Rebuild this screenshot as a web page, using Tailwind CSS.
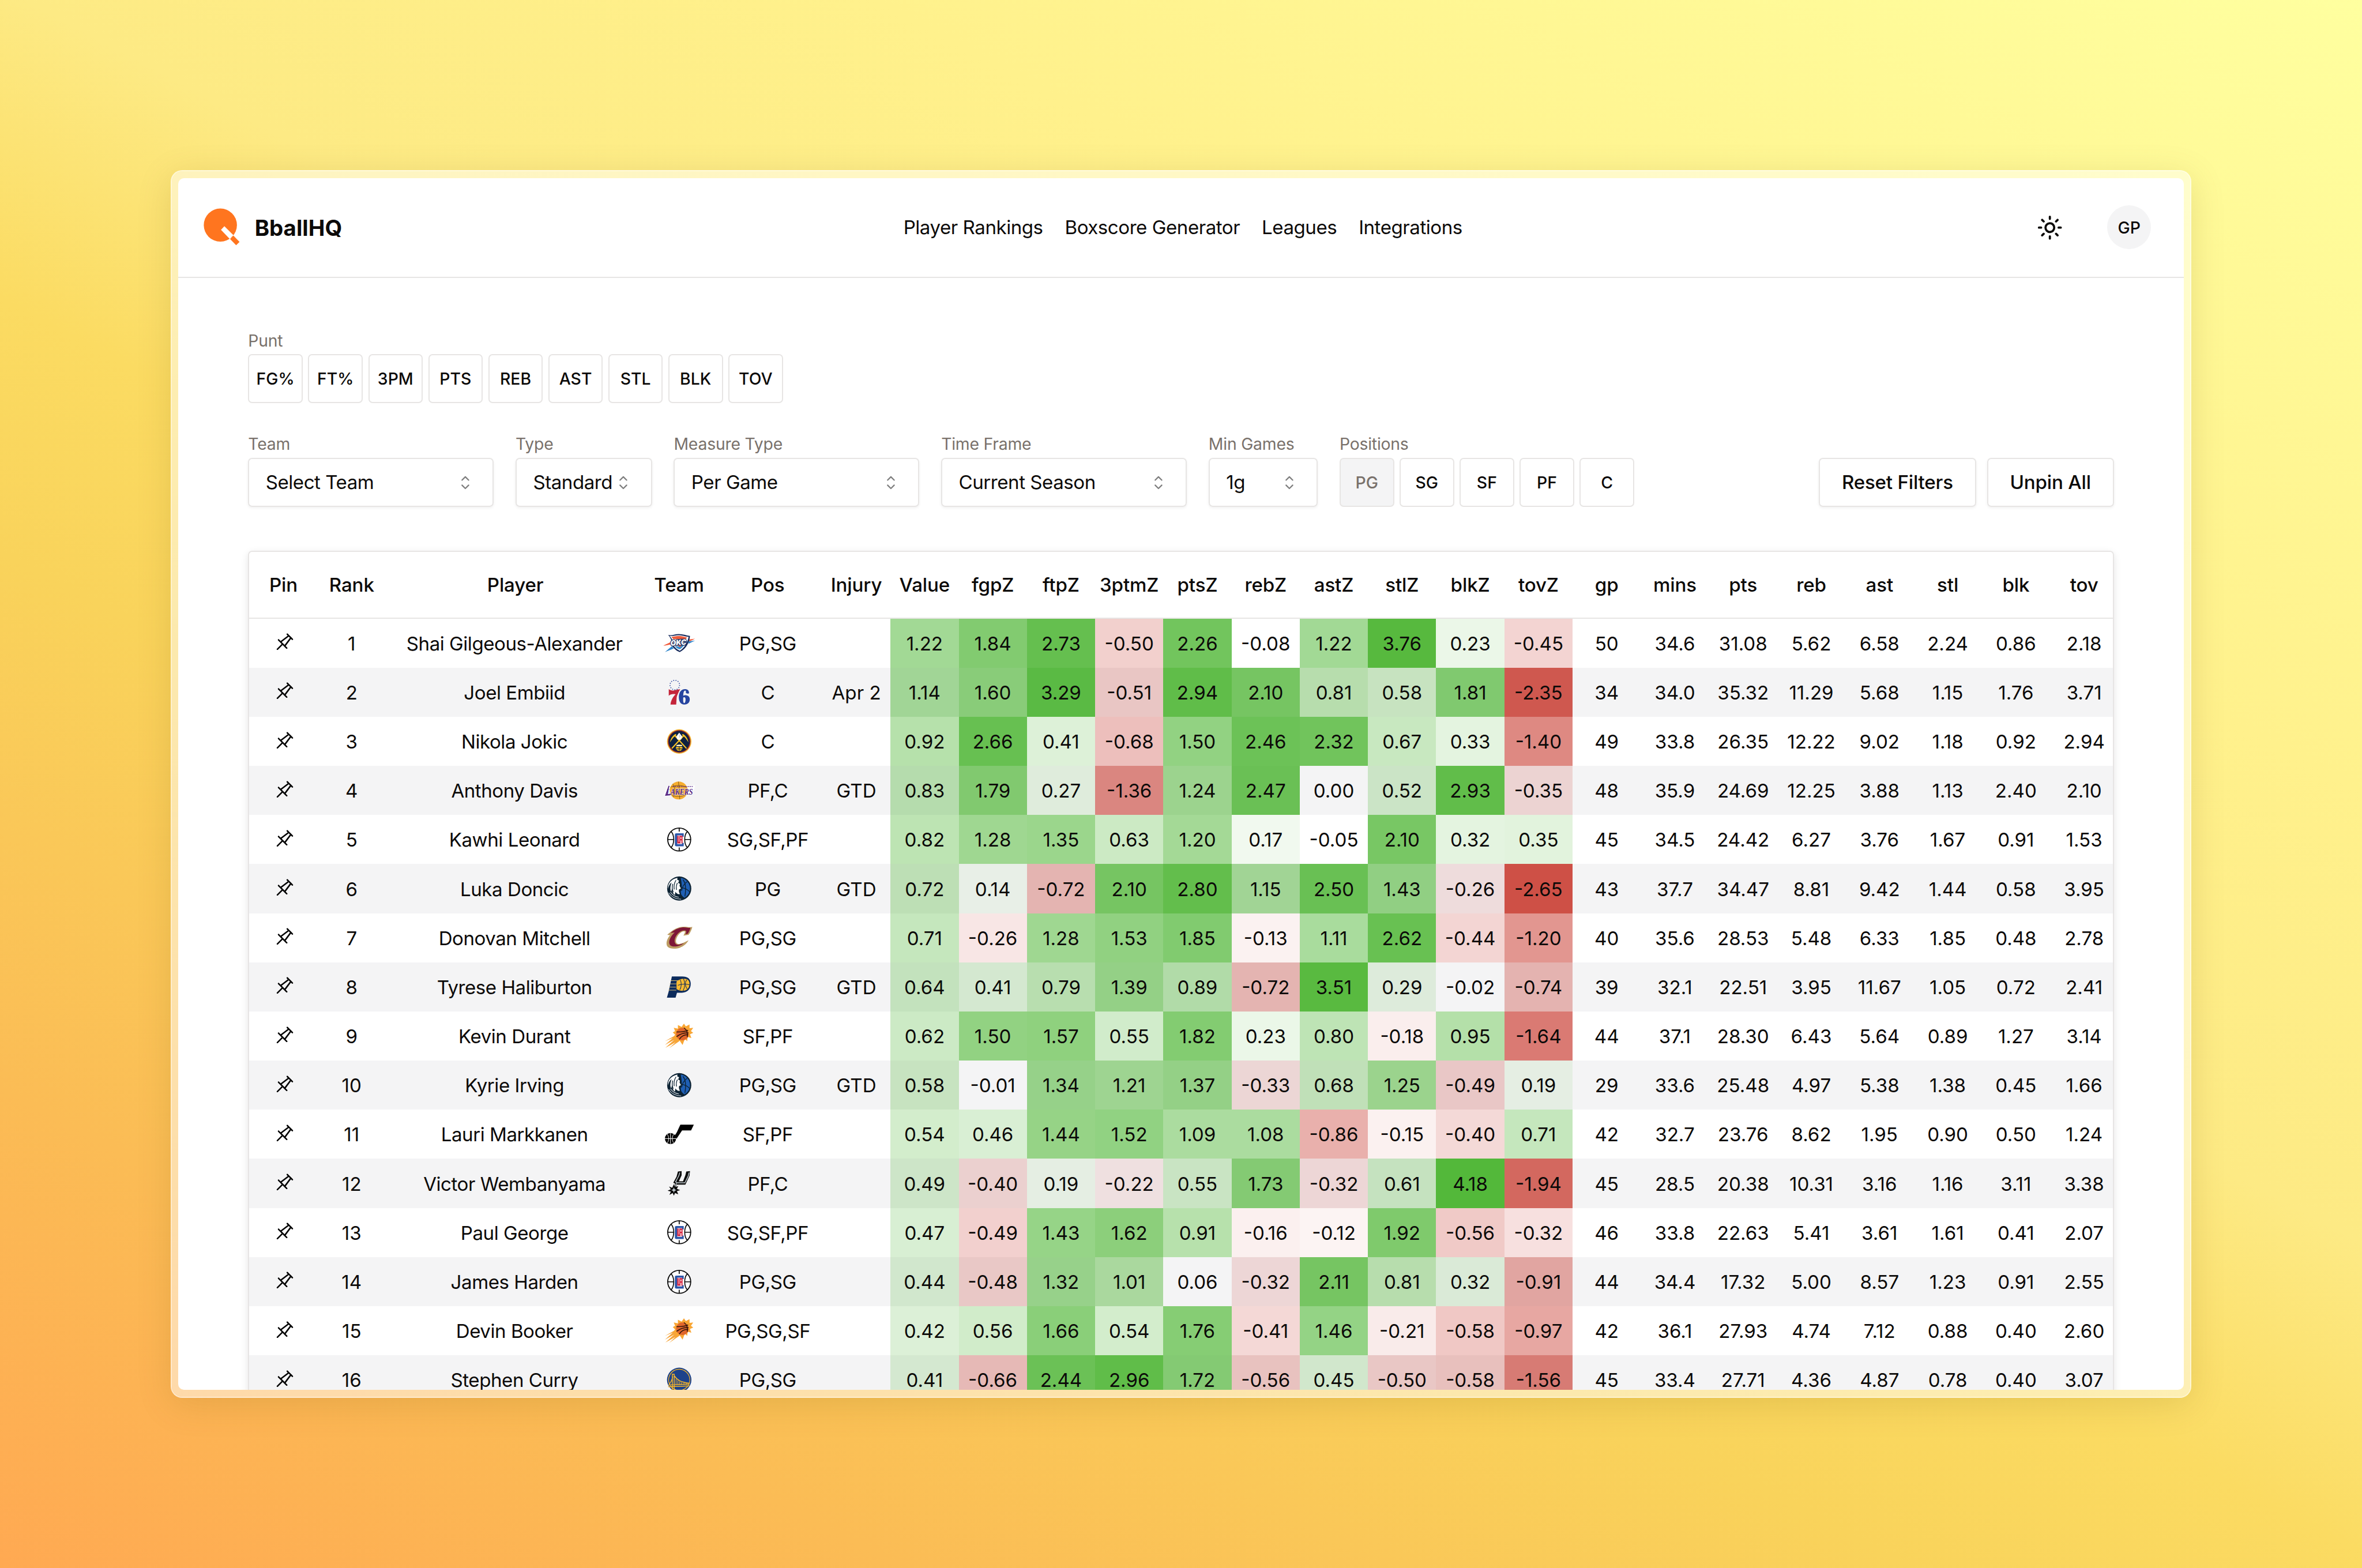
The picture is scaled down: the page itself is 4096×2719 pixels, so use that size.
<!DOCTYPE html>
<html lang="en" class="text-[37.853px]">
<head>
<meta charset="utf-8">
<title>BballHQ – Player Rankings</title>
<script src="https://cdn.jsdelivr.net/npm/@tailwindcss/browser@4"></script>
</head>
<body class="font-['Inter',sans-serif] text-stone-950 w-[4096px] h-[2719px] overflow-hidden flex items-center justify-center bg-[linear-gradient(28deg,#ffa952_0%,#fbbc55_17%,#f9d35b_36%,#fbdb62_45%,#fdea84_56%,#fff18c_72%,#ffff9f_100%)]">

<!-- Window frame -->
<div class="rounded-[20px] border-2 border-white/70 bg-white/50 bg-clip-padding p-[11.5px] shadow-[0_12px_60px_rgba(120,90,0,0.16)]">
  <div class="w-[3477.7px] h-[2101.2px] rounded-[10px] bg-white overflow-hidden flex flex-col">

    <header class="h-[172.7px] shrink-0 border-b-[2.4px] border-stone-200 flex items-center justify-between pl-4 pr-6 relative">
      <a class="flex items-center gap-2 font-bold">
        <svg class="size-8" viewBox="0 0 32 32">
          <circle cx="14.85" cy="14.5" r="12.15" fill="#ff751f"/>
          <path d="M17.8 15.3 15.3 18l6.4 6.6 2.7-2.7z" fill="#fff"/>
          <path d="m24.4 22.2-2.4 2.5 4.4 4.6 2.5-2.5z" fill="#ff751f"/>
        </svg>
        <span class="text-[38.4px] leading-none pt-[2px]">BballHQ</span>
      </a>
      <nav class="absolute left-[1257.5px] flex gap-4 text-sm tracking-[-0.0145em] pt-[1px]">
        <a>Player Rankings</a><a>Boxscore Generator</a><a>Leagues</a><a>Integrations</a>
      </nav>
      <div class="flex items-center gap-6">
        <button class="size-9 flex items-center justify-center">
          <svg class="size-[1.2rem]" viewBox="0 0 24 24" fill="none" stroke="currentColor" stroke-width="2" stroke-linecap="round" stroke-linejoin="round"><circle cx="12" cy="12" r="4"/><path d="M12 2v2M12 20v2M4.93 4.93l1.41 1.41M17.66 17.66l1.41 1.41M2 12h2M20 12h2M6.34 17.66l-1.41 1.41M19.07 4.93l-1.41 1.41"/></svg>
        </button>
        <span class="size-8 rounded-full bg-zinc-100 flex items-center justify-center text-xs font-medium pt-[3px]">GP</span>
      </div>
    </header>

    <main class="px-[121.2px] pt-[91px]">
      <section class="flex flex-col">
        <span class="text-xs text-stone-500 mb-[3.7px] tracking-[-0.008em]">Punt</span>
        <div id="punt" class="flex gap-1"></div>
      </section>

      <section class="mt-[53.1px] flex items-end gap-4">
        <div id="selects" class="flex gap-4"></div>
        <div class="flex flex-col">
          <span class="text-xs text-stone-500 mb-[3.7px] tracking-[-0.008em]">Positions</span>
          <div id="positions" class="flex gap-1"></div>
        </div>
        <div class="ml-auto flex gap-2 text-sm font-medium tracking-[-0.006em]">
          <button class="h-9 px-4 pt-[1px] border-[2.4px] border-stone-200 rounded-[7px] shadow-[0_2px_5px_rgba(0,0,0,0.06)]">Reset Filters</button>
          <button class="h-9 px-4 pt-[1px] border-[2.4px] border-stone-200 rounded-[7px] shadow-[0_2px_5px_rgba(0,0,0,0.06)]">Unpin All</button>
        </div>
      </section>

      <section class="mt-8 border-[2.4px] border-stone-200 rounded-[7px] overflow-hidden shadow-[0_4px_14px_rgba(0,0,0,0.1)] text-sm">
        <div id="head" class="grid grid-cols-[3.125rem_3.125rem_11.875rem_3.125rem_5rem_3.125rem_repeat(18,3.125rem)] h-[115.9px] pt-[2.5px] border-b-[2.4px] border-stone-200 items-center text-center font-medium whitespace-nowrap tracking-[-0.004em]"></div>
        <div id="rows"></div>
      </section>
    </main>
  </div>
</div>

<!-- Team logos -->
<svg class="hidden">
  <symbol id="OKC" viewBox="0 0 72 54">
    <path d="M1.500 33 18 25l1 5-14 3zM56 20l14-2-12 6z" fill="#ef5b3b"/>
    <path d="M5 47 20 34l4 5zM56 24l14-2-14 7z" fill="#2f86cc"/>
    <path d="M12 10c8 2 14-2 23-2s16 3 24 4c-1 14-8 27-22 35-8-3-13-8-17-14 1-9-2-16-8-23z" fill="#14285a"/>
    <path d="M15 12c8 1 12-1.500 20-1.500s14 3 21 3.500c-2 12-8 23-19 30-6-3-11-7-14-12 0-8-2-14-8-20z" fill="#fff"/>
    <path d="M19 14c6 0 10-2 16-2s12 2 17 3l-1 4H23z" fill="#ef5b3b"/>
    <path d="M26 34c8 2 16-1 23-7-3 7-7 11-12 14-4-1-8-4-11-7z" fill="#3a8fd0"/>
    <path d="M31 31c6 1 10-1 15-4-3 4-5 7-9 9z" fill="#ef5b3b"/>
    <text x="17" y="32" font-family="Inter" font-weight="900" font-style="italic" font-size="16" textLength="34" lengthAdjust="spacingAndGlyphs" fill="#fff" stroke="#14285a" stroke-width="3" paint-order="stroke" transform="rotate(-4 34 27)">OKC</text>
  </symbol>
  <symbol id="PHI" viewBox="0 0 72 54">
    <circle cx="26.300" cy="11" r="10.300" fill="none" stroke="#3d55a5" stroke-width="2" stroke-dasharray="2 2.980"/>
    <path d="M13.300 20c4 3 9 3.500 14 2 4-1 7-1 10.500-2-4 8-7 14-7.500 18l-1 15H17c1-9 5-16 11-22-5-1-10-1-14.700 3z" fill="#c4253a"/>
    <path fill-rule="evenodd" d="M57 29c0-6-3-9-9-9-8 0-13 7-13 17s4 16 12 16c7 0 11.500-4 11.500-11 0-6-4-9-10-9-1.500 0-3 .5-4 1 .2-7 1.500-11 4-11 2 0 2 2 1.500 4.500 2 2.500 6 2.500 7 1.500zM44.500 38c3-2 5 0 5 4s-1 8-3 8-2.500-5-2-12z" fill="#2745a0"/>
  </symbol>
  <symbol id="DEN" viewBox="0 0 72 54">
    <circle cx="35.800" cy="27" r="26.300" fill="#f3b52f"/><circle cx="35.800" cy="27" r="24.200" fill="#7c1d33"/><circle cx="35.800" cy="27" r="22.300" fill="#0e2240"/>
    <path d="M20 42 46 14M51.500 42 26 14" stroke="#fec524" stroke-width="2.600"/>
    <path d="M16 29c1-7 5-14 12-18l2 2c-6 4-10 9-14 16zM55.600 29c-1-7-5-14-12-18l-2 2c6 4 10 9 14 16z" fill="#fec524"/>
    <path d="m35.800 8 6.500 8.500-2.500 6-4 1-4-1-2.500-6z" fill="#fff"/><path d="m35.800 10 3 6-3 4z" fill="#c9ced8"/>
    <circle cx="35.800" cy="40.500" r="7" fill="#fec524"/><path d="M29 38h14M30 43h12M35.800 38v9" stroke="#0e2240" stroke-width="1.400"/><path d="M30 35.500h12" stroke="#fff" stroke-width="2"/>
  </symbol>
  <symbol id="LAL" viewBox="0 0 72 54">
    <path d="M2 36 12 16h8v22l-15 2zM50 16h20l-2 9-6 8-12 4z" fill="#fff" opacity=".9"/>
    <circle cx="34.700" cy="27" r="19.300" fill="#f6ad2e"/>
    <path d="M34 8c2 12 2 26 3 38M17 20c10-5 24-5 35 0M18 36c10 5 22 5 33 0M22 13c6 9 6 19 1 28" fill="none" stroke="#6b4a1e" stroke-width="1"/>
    <path d="M22 18.500h43" stroke="#552583" stroke-width="1.600" stroke-dasharray="3 1.500"/>
    <text x="8" y="36.500" font-family="Liberation Serif" font-weight="700" font-style="italic" font-size="19" textLength="57" lengthAdjust="spacingAndGlyphs" fill="#552583" stroke="#fff" stroke-width="1" paint-order="stroke">LAKERS</text>
    <path d="M14 17 7 37l10-1" fill="none" stroke="#552583" stroke-width="2.400"/>
  </symbol>
  <symbol id="LAC" viewBox="0 0 72 54">
    <circle cx="35.800" cy="27" r="24.700" fill="#fff" stroke="#0b0b0b" stroke-width="2.300"/>
    <path d="M11 27h13M48 27h13M35.800 2v8M35.800 44v8M18 9.500c8 8 8 27 0 35M53.600 9.500c-8 8-8 27 0 35" fill="none" stroke="#0b0b0b" stroke-width="2.100"/>
    <path fill-rule="evenodd" d="M29.500 13.500h16V21H42v-3H31.500v19H42v-3h3.500v7.500h-16c-2 0-3-1-3-3v-22c0-2 1-3 3-3z" fill="#2b55a8"/>
    <path d="M31.500 19h3.200v13H36V19h7v16.500H31.500z" fill="#d5233f"/><path d="M38.500 22h2v4h-2zM38.500 29h2v6.500h-2z" fill="#fff"/><path d="M35.300 19v13" stroke="#fff" stroke-width=".8"/>
  </symbol>
  <symbol id="DAL" viewBox="0 0 72 54">
    <circle cx="35.800" cy="27" r="26" fill="#0c2233"/>
    <path d="M39 4a23 23 0 0 1 8 43c-6-4-8-8-8-14 3-6 3-14 0-29z" fill="#1f5fb4"/>
    <path d="M44 8c6 8 7 20 4 36M53 12c-6 4-11 12-12 20M40 25c8 1 14 4 18 9" fill="none" stroke="#0c2233" stroke-width="1.600"/>
    <path d="M32 4C18 7 11 16 11.500 28c2-8 5-12 8-14-3 8-4 14-1 20l2-8c0 7 2 12 6 15l1-7c3 4 6 6 10 5-2-3-3-6-2-10l4-2-3-6 1-4-4-2 2-5-4-2z" fill="#fff"/>
    <path d="M29 9c-4 6-5 12-4 20M32 15c-3 5-3 9-2 15M22 17c-2 6-1 13 1 18" fill="none" stroke="#0c2233" stroke-width="1.600"/>
    <path d="M13 36c6 9 15 14 27 14M17 35c5 7 11 10 18 11" fill="none" stroke="#d5dbe0" stroke-width="1.400"/>
  </symbol>
  <symbol id="CLE" viewBox="0 0 72 54">
    <path d="M64 4c-1 5-4 12-8 17l-11 2c2-4 4-8 3-9-7-2-17 8-19 18-1 7 2 9 7 9 6-1 12-4 20-8-4 7-11 13-19 16-9 3-21 3-26-2-5-6-2-17 5-25l-6-1c5-4 11-10 18-13 8-4 16-5 24-4 5 1 9 1 12 0z" fill="#bc9b62"/>
    <path d="M60 6c-1 4-3 9-6 13l-5 1c2-4 3-7 0-8-9-2-21 8-23 20-1 8 4 12 11 10l9-3c-9 7-24 10-30 4-5-7 1-19 10-27l-9 1c8-6 16-11 27-12 7 0 11 2 16 1z" fill="#7d1637"/>
  </symbol>
  <symbol id="IND" viewBox="0 0 72 54">
    <path d="M20 4h22c12 0 18.600 5 18.600 16 0 12-8 19-19 19H31l-3 10.500H9.300L13 37z" fill="#0c2b5c"/>
    <path d="M17 13h18M15.500 20h15M14 27h15M12.500 33.500h17" stroke="#dfc27a" stroke-width="1.200"/>
    <path d="M30 15c4-4 10-6 16-6 8 0 12 4 12 11 0 9-6 15-14 15-5 0-10-1-14-4z" fill="#fdbb30"/>
    <path d="M33 23c8-3 17-3 25-1M45 9c4 8 3 18-1 26M38 11c3 6 3 16-1 22M52 11c-4 5-4 14 1 20" fill="none" stroke="#0c2b5c" stroke-width="1.300"/>
  </symbol>
  <symbol id="PHX" viewBox="0 0 72 54">
    <path d="M30 24 5 38l17-7L5 46l20-11L6 52l22-12-14 13 22-15z" fill="#f6a53a"/>
    <path d="m24 9 9 2 0-8 8 4 5-7 4 6 8-4v8l8-1-5 7 5 4-7 3 3 8-8-2-1 9-5-5-5 13-6-9-10 3 1-8-6-2 5-6-5-5 5-3z" fill="#f9a634"/>
    <circle cx="42.600" cy="22.500" r="13.500" fill="#e0662c"/>
    <path d="M30 18c8 0 18 0 25-4M30 28c7-5 16-9 26-8M36 34c4-7 12-11 19-10M46 9c6 4 9 12 7 20" fill="none" stroke="#27120b" stroke-width="1.800"/>
  </symbol>
  <symbol id="UTA" viewBox="0 0 72 54">
    <path d="M38.300 6.500h29l-6 12.300H42L30 37l-4-8c4-2 8-14 12.300-22.500z"/>
    <circle cx="17" cy="36.500" r="12"/>
    <path d="M5 36.500h24M17 25v23M10 27c4 5 4 14 0 19M24 27c-4 5-4 14 0 19" fill="none" stroke="#fff" stroke-width="1.200"/>
  </symbol>
  <symbol id="SAS" viewBox="0 0 72 54">
    <path d="m33 2 8-1 0 9-6 13h9l5-13 2-8 8-1-1 10-9 19H30l-2 10h-4l3-12-4-2 7-13z" fill="#0b0b0b"/>
    <path d="m37 4-2 7-7 13 3 2h17l7-14 2-8M30 27l-3 7" fill="none" stroke="#c4ced4" stroke-width="1.700"/>
    <path d="m24.300 29 2.500 7 7-3-3 6 7 3-7 2 3 7-7-3-2.500 6-2.500-6-7 4 3-7-7-2 7-3-4-6 7 3z" fill="#0b0b0b"/>
    <path d="m24.300 36 1.500 4 4 2-4 1.500-1.500 4-1.500-4-4-1.500 4-2z" fill="#c4ced4"/>
  </symbol>
  <symbol id="GSW" viewBox="0 0 72 54">
    <circle cx="35.800" cy="27" r="26.300" fill="#1d428a"/><circle cx="35.800" cy="27" r="22.800" fill="none" stroke="#fdb927" stroke-width="1.400"/>
    <path d="M21 50V15h4v35M14 36c4-3 6-8 8-16M25 18c6 9 14 14 32 16M12 38l46-2M12 42l46-2" fill="none" stroke="#fdb927" stroke-width="1.800"/>
    <path d="M29 25v13M33 28v10M37 30v8M41 32v6M46 33v5M51 34v4" stroke="#fdb927" stroke-width="1.300"/>
  </symbol>
  <symbol id="pin" viewBox="0 0 15 15"><path fill-rule="evenodd" clip-rule="evenodd" d="M10.3285 1.13607C10.1332 0.940809 9.81662 0.940808 9.62136 1.13607C9.42609 1.33133 9.42609 1.64792 9.62136 1.84318L10.2744 2.49619L5.42563 6.13274L4.31805 5.02516C4.12279 4.8299 3.80621 4.8299 3.61095 5.02516C3.41569 5.22042 3.41569 5.537 3.61095 5.73226L5.02516 7.14648L6.08582 8.20714L2.81545 11.4775C2.62019 11.6728 2.62019 11.9894 2.81545 12.1846C3.01072 12.3799 3.3273 12.3799 3.52256 12.1846L6.79293 8.91425L7.85359 9.97491L9.2678 11.3891C9.46306 11.5844 9.77965 11.5844 9.97491 11.3891C10.1702 11.1939 10.1702 10.8773 9.97491 10.682L8.86733 9.57443L12.5039 4.7257L13.1569 5.37871C13.3522 5.57397 13.6687 5.57397 13.864 5.37871C14.0593 5.18345 14.0593 4.86687 13.864 4.67161L12.8033 3.61095L11.3891 2.19674L10.3285 1.13607ZM6.13992 6.84702L10.9887 3.21047L11.7896 4.01142L8.15305 8.86015L6.13992 6.84702Z"/></symbol>
  <symbol id="caret" viewBox="0 0 15 15"><path fill-rule="evenodd" clip-rule="evenodd" d="M4.93179 5.43179C4.75605 5.60753 4.75605 5.89245 4.93179 6.06819C5.10753 6.24392 5.39245 6.24392 5.56819 6.06819L7.49999 4.13638L9.43179 6.06819C9.60753 6.24392 9.89245 6.24392 10.0682 6.06819C10.2439 5.89245 10.2439 5.60753 10.0682 5.43179L7.81819 3.18179C7.73379 3.0974 7.61933 3.04999 7.49999 3.04999C7.38064 3.04999 7.26618 3.0974 7.18179 3.18179L4.93179 5.43179ZM10.0682 9.56819C10.2439 9.39245 10.2439 9.10753 10.0682 8.93179C9.89245 8.75606 9.60753 8.75606 9.43179 8.93179L7.49999 10.8636L5.56819 8.93179C5.39245 8.75606 5.10753 8.75606 4.93179 8.93179C4.75605 9.10753 4.75605 9.39245 4.93179 9.56819L7.18179 11.8182C7.26618 11.9026 7.38064 11.95 7.49999 11.95C7.61933 11.95 7.73379 11.9026 7.81819 11.8182L10.0682 9.56819Z"/></symbol>
</svg>

<script>
const $ = id => document.getElementById(id);

const toggle = (label, off) => `<button class="h-9 w-10 pt-[3px] border-[2.4px] border-stone-200 rounded-[7px] text-xs font-medium ${off ? 'bg-zinc-100 text-stone-500' : 'bg-white'}">${label}</button>`;
$('punt').innerHTML = ['FG%','FT%','3PM','PTS','REB','AST','STL','BLK','TOV'].map(l => toggle(l)).join('');
$('positions').innerHTML = ['PG','SG','SF','PF','C'].map((l, i) => toggle(l, i === 0)).join('');

$('selects').innerHTML = [
  ['Team','Select Team','w-45'], ['Type','Standard','w-25'], ['Measure Type','Per Game','w-45'],
  ['Time Frame','Current Season','w-45'], ['Min Games','1g','w-20']
].map(([label, value, w]) => `
  <div class="flex flex-col">
    <span class="text-xs text-stone-500 mb-[3.7px] whitespace-nowrap tracking-[-0.008em]">${label}</span>
    <button class="${w} h-9 px-3 border-[2.4px] border-stone-200 rounded-[7px] shadow-[0_2px_5px_rgba(0,0,0,0.06)] flex items-center justify-between text-sm whitespace-nowrap">
      <span class="pt-[1px] tracking-[-0.0145em]">${value}</span><svg class="size-4 opacity-50 shrink-0"><use href="#caret"/></svg>
    </button>
  </div>`).join('');

$('head').innerHTML = 'Pin Rank Player Team Pos Injury Value fgpZ ftpZ 3ptmZ ptsZ rebZ astZ stlZ blkZ tovZ gp mins pts reb ast stl blk tov'
  .split(' ').map(h => `<span class="flex justify-center">${h}</span>`).join('');

const players = `Shai Gilgeous-Alexander|OKC|PG,SG||1.22 1.84 2.73 -0.50 2.26 -0.08 1.22 3.76 0.23 -0.45|50 34.6 31.08 5.62 6.58 2.24 0.86 2.18
Joel Embiid|PHI|C|Apr 2|1.14 1.60 3.29 -0.51 2.94 2.10 0.81 0.58 1.81 -2.35|34 34.0 35.32 11.29 5.68 1.15 1.76 3.71
Nikola Jokic|DEN|C||0.92 2.66 0.41 -0.68 1.50 2.46 2.32 0.67 0.33 -1.40|49 33.8 26.35 12.22 9.02 1.18 0.92 2.94
Anthony Davis|LAL|PF,C|GTD|0.83 1.79 0.27 -1.36 1.24 2.47 0.00 0.52 2.93 -0.35|48 35.9 24.69 12.25 3.88 1.13 2.40 2.10
Kawhi Leonard|LAC|SG,SF,PF||0.82 1.28 1.35 0.63 1.20 0.17 -0.05 2.10 0.32 0.35|45 34.5 24.42 6.27 3.76 1.67 0.91 1.53
Luka Doncic|DAL|PG|GTD|0.72 0.14 -0.72 2.10 2.80 1.15 2.50 1.43 -0.26 -2.65|43 37.7 34.47 8.81 9.42 1.44 0.58 3.95
Donovan Mitchell|CLE|PG,SG||0.71 -0.26 1.28 1.53 1.85 -0.13 1.11 2.62 -0.44 -1.20|40 35.6 28.53 5.48 6.33 1.85 0.48 2.78
Tyrese Haliburton|IND|PG,SG|GTD|0.64 0.41 0.79 1.39 0.89 -0.72 3.51 0.29 -0.02 -0.74|39 32.1 22.51 3.95 11.67 1.05 0.72 2.41
Kevin Durant|PHX|SF,PF||0.62 1.50 1.57 0.55 1.82 0.23 0.80 -0.18 0.95 -1.64|44 37.1 28.30 6.43 5.64 0.89 1.27 3.14
Kyrie Irving|DAL|PG,SG|GTD|0.58 -0.01 1.34 1.21 1.37 -0.33 0.68 1.25 -0.49 0.19|29 33.6 25.48 4.97 5.38 1.38 0.45 1.66
Lauri Markkanen|UTA|SF,PF||0.54 0.46 1.44 1.52 1.09 1.08 -0.86 -0.15 -0.40 0.71|42 32.7 23.76 8.62 1.95 0.90 0.50 1.24
Victor Wembanyama|SAS|PF,C||0.49 -0.40 0.19 -0.22 0.55 1.73 -0.32 0.61 4.18 -1.94|45 28.5 20.38 10.31 3.16 1.16 3.11 3.38
Paul George|LAC|SG,SF,PF||0.47 -0.49 1.43 1.62 0.91 -0.16 -0.12 1.92 -0.56 -0.32|46 33.8 22.63 5.41 3.61 1.61 0.41 2.07
James Harden|LAC|PG,SG||0.44 -0.48 1.32 1.01 0.06 -0.32 2.11 0.81 0.32 -0.91|44 34.4 17.32 5.00 8.57 1.23 0.91 2.55
Devin Booker|PHX|PG,SG,SF||0.42 0.56 1.66 0.54 1.76 -0.41 1.46 -0.21 -0.58 -0.97|42 36.1 27.93 4.74 7.12 0.88 0.40 2.60
Stephen Curry|GSW|PG,SG||0.41 -0.66 2.44 2.96 1.72 -0.56 0.45 -0.50 -0.58 -1.56|45 33.4 27.71 4.36 4.87 0.78 0.40 3.07`.split('\n').map(l => l.split('|'));

// Heat colour: green above the mean, red below it, fading out towards zero.
const heat = v => {
  const a = Math.abs(v) < 0.1 ? 0 : Math.tanh(Math.abs(v) * 0.47);
  return v > 0 ? `rgba(76,181,50,${a.toFixed(3)})` : `rgba(198,50,38,${a.toFixed(3)})`;
};

$('rows').innerHTML = players.map(([name, team, pos, injury, z, stats], i) => `
  <div class="grid grid-cols-[3.125rem_3.125rem_11.875rem_3.125rem_5rem_3.125rem_repeat(18,3.125rem)] h-9 text-center whitespace-nowrap ${i % 2 ? 'bg-zinc-100' : 'bg-white'}">
    <span class="flex items-center justify-center"><svg class="size-4"><use href="#pin"/></svg></span>
    <span class="flex items-center justify-center pt-[2.5px]">${i + 1}</span>
    <span class="flex items-center justify-center pt-[2.5px] pr-[3px] tracking-[-0.0145em]">${name}</span>
    <span class="flex items-center justify-center"><svg class="w-[58px] h-[43.5px] overflow-visible"><use href="#${team}" class="overflow-visible"/></svg></span>
    <span class="flex items-center justify-center pt-[2.5px] tracking-[-0.0145em]">${pos}</span>
    <span class="flex items-center justify-center pt-[2.5px]">${injury}</span>
    ${z.split(' ').map(v => `<span class="flex items-center justify-center pt-[2.5px]" style="background-color:${heat(+v)}">${v}</span>`).join('')}
    ${stats.split(' ').map(v => `<span class="flex items-center justify-center pt-[2.5px]">${v}</span>`).join('')}
  </div>`).join('');
</script>
</body>
</html>
